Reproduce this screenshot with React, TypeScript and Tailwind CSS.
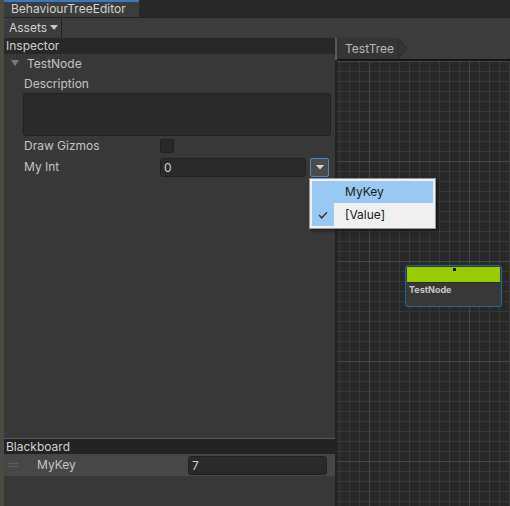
import React from 'react';

const font = { fontFamily: 'Inter, "Noto Sans", sans-serif' };

const GridCanvas: React.FC = () => (
  <svg className="absolute inset-0 w-full h-full" xmlns="http://www.w3.org/2000/svg">
    <defs>
      <pattern id="minor" width="10" height="10" patternUnits="userSpaceOnUse" x="2" y="0">
        <path d="M 0 0.5 H 10 M 0.5 0 V 10" stroke="#383838" strokeWidth="1" fill="none" />
      </pattern>
      <pattern id="major" width="100" height="100" patternUnits="userSpaceOnUse" x="32" y="0">
        <path d="M 0 0.5 H 100 M 0.5 0 V 100" stroke="#464646" strokeWidth="1" fill="none" />
      </pattern>
    </defs>
    <rect width="100%" height="100%" fill="#282828" />
    <rect width="100%" height="100%" fill="url(#minor)" />
    <rect width="100%" height="100%" fill="url(#major)" />
  </svg>
);

const Field: React.FC<{ className?: string; children?: React.ReactNode }> = ({ className = '', children }) => (
  <div className={`bg-[#2a2a2a] border border-[#212121] rounded-[3px] text-[12px] text-[#d2d2d2] pl-[3px] leading-[17px] ${className}`}>
    {children}
  </div>
);

export default function App() {
  return (
    <div className="w-[510px] h-[506px] flex bg-[#4e4943] overflow-hidden select-none" style={font}>
      <div className="w-[4px] shrink-0" />
      <div className="flex-1 flex flex-col min-w-0">
        {/* tab strip */}
        <div className="h-[17px] bg-[#282828] flex shrink-0">
          <div className="w-[135px] bg-[#3c3c3c] border-t-2 border-[#3a79bb] text-[12px] text-[#d2d2d2] pl-[7px] leading-[14px]">
            BehaviourTreeEditor
          </div>
        </div>
        {/* toolbar */}
        <div className="h-[21px] bg-[#3c3c3c] flex items-center shrink-0 border-t border-[#232323]">
          <div className="h-full w-[58px] border-r border-[#232323] flex items-center gap-[3px] pl-[5px] text-[12px] text-[#d2d2d2]">
            Assets
            <svg width="8" height="6" viewBox="0 0 8 6"><path d="M0 0 H8 L4 5 Z" fill="#c4c4c4" /></svg>
          </div>
        </div>
        <div className="flex-1 flex min-h-0">
          {/* left column */}
          <div className="w-[331px] bg-[#383838] flex flex-col relative">
            <div className="h-[16px] bg-[#282828] text-[12px] text-[#d2d2d2] pl-[2px] leading-[16px]">Inspector</div>
            <div className="flex-1 flex flex-col text-[12px] text-[#c4c4c4]">
              <div className="h-[17px] flex items-center pl-[7px] gap-[8px] mt-[1px]">
                <svg width="8" height="7" viewBox="0 0 8 7"><path d="M0 0 H8 L4 6 Z" fill="#7a7a7a" /></svg>
                <span>TestNode</span>
              </div>
              <div className="pl-[20px] pr-[4px] mt-[4px] leading-[16px]">Description</div>
              <Field className="ml-[19px] mr-[4px] h-[43px] mt-[1px]" />
              <div className="flex items-center h-[16px] mt-[2px] pl-[20px]">
                <span className="w-[136px]">Draw Gizmos</span>
                <div className="w-[14px] h-[14px] bg-[#2a2a2a] border border-[#202020] rounded-[2px]" />
              </div>
              <div className="flex items-center h-[19px] mt-[4px] pl-[20px]">
                <span className="w-[136px] mb-[2px]">My Int</span>
                <Field className="w-[146px] h-[19px]">0</Field>
                <div className="w-[19px] h-[19px] ml-[4px] bg-[#4b4b4b] border border-[#4a86c8] rounded-[2px] flex items-center justify-center">
                  <svg width="8" height="5" viewBox="0 0 8 5"><path d="M0 0 H8 L4 4.5 Z" fill="#d8d8d8" /></svg>
                </div>
              </div>
              <div className="flex-1" />
              <div className="border-t border-[#595959] h-[16px] bg-[#232323] text-[#d2d2d2] pl-[2px] leading-[15px]">Blackboard</div>
              <div className="h-[22px] bg-[#474747] flex items-center">
                <div className="w-[33px] pl-[4px] flex flex-col gap-[2px]">
                  <div className="w-[10px] h-[1px] bg-[#5e5e5e]" />
                  <div className="w-[10px] h-[1px] bg-[#5e5e5e]" />
                </div>
                <span className="w-[151px]">MyKey</span>
                <Field className="w-[139px] h-[19px]">7</Field>
              </div>
              <div className="h-[30px]" />
            </div>
            {/* dropdown menu */}
            <div className="absolute left-[305px] top-[140px] w-[127px] h-[51px] bg-[#f0f0f0] border border-[#9a9a9a] shadow-[2px_2px_3px_rgba(0,0,0,0.45)] p-[2px] z-10 text-[12px] text-[#1a1a1a]">
              <div className="flex h-[22px] bg-[#99c9f3]">
                <div className="w-[22px]" />
                <span className="pl-[11px] leading-[22px]">MyKey</span>
              </div>
              <div className="flex h-[23px]">
                <div className="w-[22px] bg-[#99c9f3] flex items-center justify-center">
                  <svg width="10" height="8" viewBox="0 0 10 8"><path d="M1 4 L3.8 6.8 L9 1.2" stroke="#3a3a3a" strokeWidth="1.5" fill="none" /></svg>
                </div>
                <span className="pl-[11px] leading-[23px]">[Value]</span>
              </div>
            </div>
          </div>
          {/* divider */}
          <div className="w-[2px] bg-[#232323] flex flex-col">
            <div className="h-[22px] bg-[#5a5a5a]" />
          </div>
          {/* right column */}
          <div className="flex-1 flex flex-col min-w-0">
            <div className="h-[21px] bg-[#3c3c3c] flex items-end shrink-0">
              <div className="relative h-[21px] flex items-center">
                <div className="h-[21px] bg-[#353535] pl-[8px] pr-[4px] flex items-center text-[12px] text-[#b8b8b8]">TestTree</div>
                <svg width="10" height="21" viewBox="0 0 10 21"><path d="M0 0 L9 10.5 L0 21 Z" fill="#353535" stroke="#2a2a2a" strokeWidth="1" /></svg>
              </div>
            </div>
            <div className="h-[2px] bg-[#141414] shrink-0" />
            <div className="flex-1 relative overflow-hidden">
              <GridCanvas />
              {/* node */}
              <div className="absolute left-[68px] top-[204px] w-[97px] h-[42px] border border-[#1d6a99] rounded-[3px] bg-[#383838] p-[1px] flex flex-col">
                <div className="h-[16px] bg-[#99cc00] relative border-b border-[#2a2a2a]">
                  <div className="absolute left-[46px] top-[1px] w-[3px] h-[3px] bg-[#111]" />
                </div>
                <div className="text-[9px] font-bold text-[#c8c8c8] pl-[2px] leading-[14px]">TestNode</div>
              </div>
            </div>
          </div>
        </div>
      </div>
    </div>
  );
}
